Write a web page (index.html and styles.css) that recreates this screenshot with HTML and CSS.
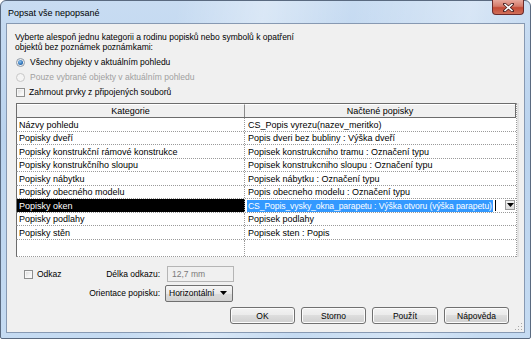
FILE: index.html
```html
<!DOCTYPE html>
<html lang="cs">
<head>
<meta charset="utf-8">
<title>Popsat vše nepopsané</title>
<link rel="stylesheet" href="styles.css">
</head>
<body>
<div class="window">
  <div class="titlebar">
    <span class="title">Popsat vše nepopsané</span>
    <div class="close">
      <svg width="11" height="9" viewBox="0 0 11 9"><path d="M1.5 1 L9.5 8 M9.5 1 L1.5 8" stroke="#4a2020" stroke-width="3" stroke-linecap="square"/><path d="M1.5 1 L9.5 8 M9.5 1 L1.5 8" stroke="#ffffff" stroke-width="1.6"/></svg>
    </div>
  </div>
  <div class="client">
    <p class="desc">Vyberte alespoň jednu kategorii a rodinu popisků nebo symbolů k opatření<br>objektů bez poznámek poznámkami:</p>
    <div class="opt"><span class="radio checked"></span>Všechny objekty v aktuálním pohledu</div>
    <div class="opt disabled"><span class="radio"></span>Pouze vybrané objekty v aktuálním pohledu</div>
    <div class="opt"><span class="check"></span>Zahrnout prvky z připojených souborů</div>

    <div class="grid">
      <div class="hdr"><div class="hcell c1">Kategorie</div><div class="hcell c2">Načtené popisky</div></div>
      <div class="row"><div class="cell c1">Názvy pohledu</div><div class="cell c2">CS_Popis vyrezu(nazev_meritko)</div></div>
      <div class="row"><div class="cell c1">Popisky dveří</div><div class="cell c2">Popis dveri bez bubliny : Výška dveří</div></div>
      <div class="row"><div class="cell c1">Popisky konstrukční rámové konstrukce</div><div class="cell c2">Popisek konstrukcniho tramu : Označení typu</div></div>
      <div class="row"><div class="cell c1">Popisky konstrukčního sloupu</div><div class="cell c2">Popisek konstrukcniho sloupu : Označení typu</div></div>
      <div class="row"><div class="cell c1">Popisky nábytku</div><div class="cell c2">Popisek nábytku : Označení typu</div></div>
      <div class="row"><div class="cell c1">Popisky obecného modelu</div><div class="cell c2">Popis obecneho modelu : Označení typu</div></div>
      <div class="row sel"><div class="cell c1">Popisky oken</div><div class="cell c2 edit"><span class="hl">CS_Popis_vysky_okna_parapetu : Výška otvoru (výška parapetu)</span><span class="caret"></span><span class="ddbtn"><svg width="7" height="4" viewBox="0 0 7 4"><path d="M0 0 H7 L3.5 4 Z" fill="#000"/></svg></span></div></div>
      <div class="row"><div class="cell c1">Popisky podlahy</div><div class="cell c2">Popisek podlahy</div></div>
      <div class="row"><div class="cell c1">Popisky stěn</div><div class="cell c2">Popisek sten : Popis</div></div>
      <div class="filler"><div class="cell c1"></div><div class="cell c2"></div></div>
    </div>

    <div class="lower">
      <div class="lrow">
        <div class="odkaz"><span class="check"></span>Odkaz</div>
        <span class="lbl">Délka odkazu:</span>
        <div class="textbox">12,7 mm</div>
      </div>
      <div class="lrow">
        <span class="lbl">Orientace popisku:</span>
        <div class="select">Horizontální<svg width="7" height="4" viewBox="0 0 7 4"><path d="M0 0 H7 L3.5 4 Z" fill="#000"/></svg></div>
      </div>
    </div>

    <div class="buttons">
      <div class="btn">OK</div>
      <div class="btn">Storno</div>
      <div class="btn">Použít</div>
      <div class="btn">Nápověda</div>
    </div>
    <div class="grip"></div>
  </div>
</div>
</body>
</html>
```
FILE: styles.css
```css
html, body {
  margin: 0;
  padding: 0;
  background: #ffffff;
}
body {
  width: 531px;
  height: 339px;
  overflow: hidden;
  font-family: "Liberation Sans", Arial, sans-serif;
}
.window {
  box-sizing: border-box;
  width: 531px;
  height: 339px;
  border: 1px solid #5a6a80;
  border-radius: 6px 6px 2px 2px;
  background:
    linear-gradient(100deg, rgba(255,255,255,0) 30%, rgba(255,255,255,0.35) 45%, rgba(255,255,255,0) 60%, rgba(255,255,255,0.3) 80%, rgba(255,255,255,0) 92%),
    linear-gradient(180deg, #c8dcf2 0%, #bad3ee 40%, #c5dbf2 100%);
  display: flex;
  flex-direction: column;
  padding: 0 5px 5px 5px;
}
.titlebar {
  height: 22px;
  display: flex;
  align-items: center;
  justify-content: space-between;
  position: relative;
}
.title {
  font-size: 9px;
  color: #000;
  padding-left: 2px;
  padding-top: 1px;
}
.close {
  position: absolute;
  right: 1px;
  top: -1px;
  width: 32px;
  height: 15px;
  box-sizing: border-box;
  border: 1px solid #6b2a2a;
  border-top: none;
  border-radius: 0 0 4px 4px;
  background: linear-gradient(180deg, #e8a89c 0%, #d47a6a 45%, #c44a36 55%, #d0705a 100%);
  display: flex;
  align-items: center;
  justify-content: center;
}
.client {
  flex: 1;
  background: #f0f0f0;
  border: 1px solid #8799b2;
  position: relative;
  display: flex;
  flex-direction: column;
  padding: 0 15px 0 8px;
}
.desc {
  margin: 8px 0 0 0;
  font-size: 8.5px;
  line-height: 10px;
  color: #000;
}
.opt {
  font-size: 8.5px;
  height: 14px;
  display: flex;
  align-items: center;
  color: #000;
  margin-left: 1px;
}
.desc + .opt {
  margin-top: 3px;
}
.opt.disabled {
  color: #a0a0a0;
  margin-top: 1px;
}
.opt + .opt:not(.disabled) {
  margin-top: 1px;
}
.radio {
  width: 9px;
  height: 9px;
  box-sizing: border-box;
  border-radius: 50%;
  border: 1px solid #8e9aa8;
  background: radial-gradient(circle at 50% 50%, #ffffff 0%, #e6e6e6 100%);
  margin-right: 5px;
  display: inline-flex;
  align-items: center;
  justify-content: center;
}
.radio.checked::after {
  content: "";
  width: 5px;
  height: 5px;
  border-radius: 50%;
  background: radial-gradient(circle at 40% 35%, #8fc4f0 0%, #2a6fb6 60%, #1b4e8a 100%);
}
.disabled .radio {
  border-color: #c8c8c8;
  background: #f4f4f4;
}
.check {
  width: 9px;
  height: 9px;
  box-sizing: border-box;
  border: 1px solid #8e8f8f;
  background: linear-gradient(135deg, #d8d8d8 0%, #f4f4f4 60%, #ffffff 100%);
  box-shadow: inset 0 0 0 1px #f7f7f7;
  margin-right: 4px;
  display: inline-block;
}

/* grid */
.grid {
  margin-top: 4px;
  width: 500px;
  margin-left: 1px;
  background: #fff;
  font-size: 9px;
  color: #000;
  border-right: 1px dotted #9a9a9a;
  box-shadow: 2px 0 0 #e2e2e2;
}
.hdr {
  display: flex;
  height: 15px;
  box-sizing: border-box;
  border: 1px solid #6c6c6c;
  background: #f0f0f0;
}
.hcell {
  display: flex;
  align-items: center;
  justify-content: center;
  box-sizing: border-box;
  border-top: 1px solid #ffffff;
}
.hcell.c1 {
  width: 228px;
  border-right: 1px solid #8a8a8a;
}
.hcell.c2 {
  flex: 1;
}
.row, .filler {
  display: flex;
  box-sizing: border-box;
  border-bottom: 1px dotted #9a9a9a;
  border-left: 1px solid #6c6c6c;
}
.row {
  height: 14px;
}
.row:nth-child(odd) {
  height: 13px;
}
.filler {
  height: 17px;
}
.cell {
  display: flex;
  align-items: center;
  box-sizing: border-box;
  padding-left: 2px;
  white-space: nowrap;
  overflow: hidden;
}
.cell.c1 {
  width: 228px;
  border-right: 1px dotted #9a9a9a;
}
.cell.c2 {
  flex: 1;
  padding-left: 3px;
}
.sel .c1 {
  background: #000;
  color: #fff;
}
.edit {
  position: relative;
  padding-right: 14px;
}
.hl {
  background: #3399ff;
  color: #fff;
  line-height: 12px;
  padding: 0 1px;
  margin-left: -1px;
  font-size: 8.6px;
  letter-spacing: -0.1px;
}
.caret {
  width: 1px;
  height: 11px;
  background: #000;
  margin-left: 2px;
  flex: none;
}
.ddbtn {
  position: absolute;
  right: 1px;
  top: 1px;
  width: 10px;
  height: 10px;
  box-sizing: border-box;
  border: 1px solid #9c9c9c;
  background: linear-gradient(180deg, #f4f4f4, #dcdcdc);
  display: flex;
  align-items: center;
  justify-content: center;
}

/* lower section */
.lower {
  margin-top: 8px;
  font-size: 8.5px;
  color: #000;
}
.lrow {
  display: flex;
  align-items: center;
  height: 18px;
}
.lrow + .lrow {
  margin-top: 1px;
}
.odkaz {
  width: 84px;
  display: flex;
  align-items: center;
  padding-left: 9px;
  box-sizing: border-box;
}
.lbl {
  width: 145px;
  text-align: right;
  flex: none;
}
.odkaz + .lbl {
  width: 61px;
}
.textbox {
  margin-left: 7px;
  width: 67px;
  height: 16px;
  box-sizing: border-box;
  border: 1px solid #b5b5b5;
  background: #f0f0f0;
  color: #7a7a7a;
  display: flex;
  align-items: center;
  padding-left: 4px;
}
.select {
  margin-left: 5px;
  width: 68px;
  height: 17px;
  box-sizing: border-box;
  border: 1px solid #707070;
  border-radius: 2px;
  background: linear-gradient(180deg, #f6f6f6 0%, #e8e8e8 50%, #dadada 51%, #d2d2d2 100%);
  display: flex;
  align-items: center;
  justify-content: space-between;
  padding: 0 5px 0 3px;
}
.buttons {
  display: flex;
  justify-content: flex-end;
  gap: 6px;
  margin-top: 5px;
}
.btn {
  width: 65px;
  height: 17px;
  box-sizing: border-box;
  border: 1px solid #707070;
  border-radius: 3px;
  background: linear-gradient(180deg, #f3f3f3 0%, #ebebeb 45%, #dddddd 50%, #cfcfcf 100%);
  box-shadow: inset 0 0 0 1px #fcfcfc;
  font-size: 8.5px;
  display: flex;
  align-items: center;
  justify-content: center;
  color: #000;
}
.btn:nth-child(3) {
  width: 66px;
}
.grip {
  position: absolute;
  right: 2px;
  bottom: 2px;
  width: 8px;
  height: 8px;
  background-image: radial-gradient(circle, #a8a8a8 0.8px, transparent 1px);
  background-size: 3px 3px;
  clip-path: polygon(100% 0, 100% 100%, 0 100%);
}
```
